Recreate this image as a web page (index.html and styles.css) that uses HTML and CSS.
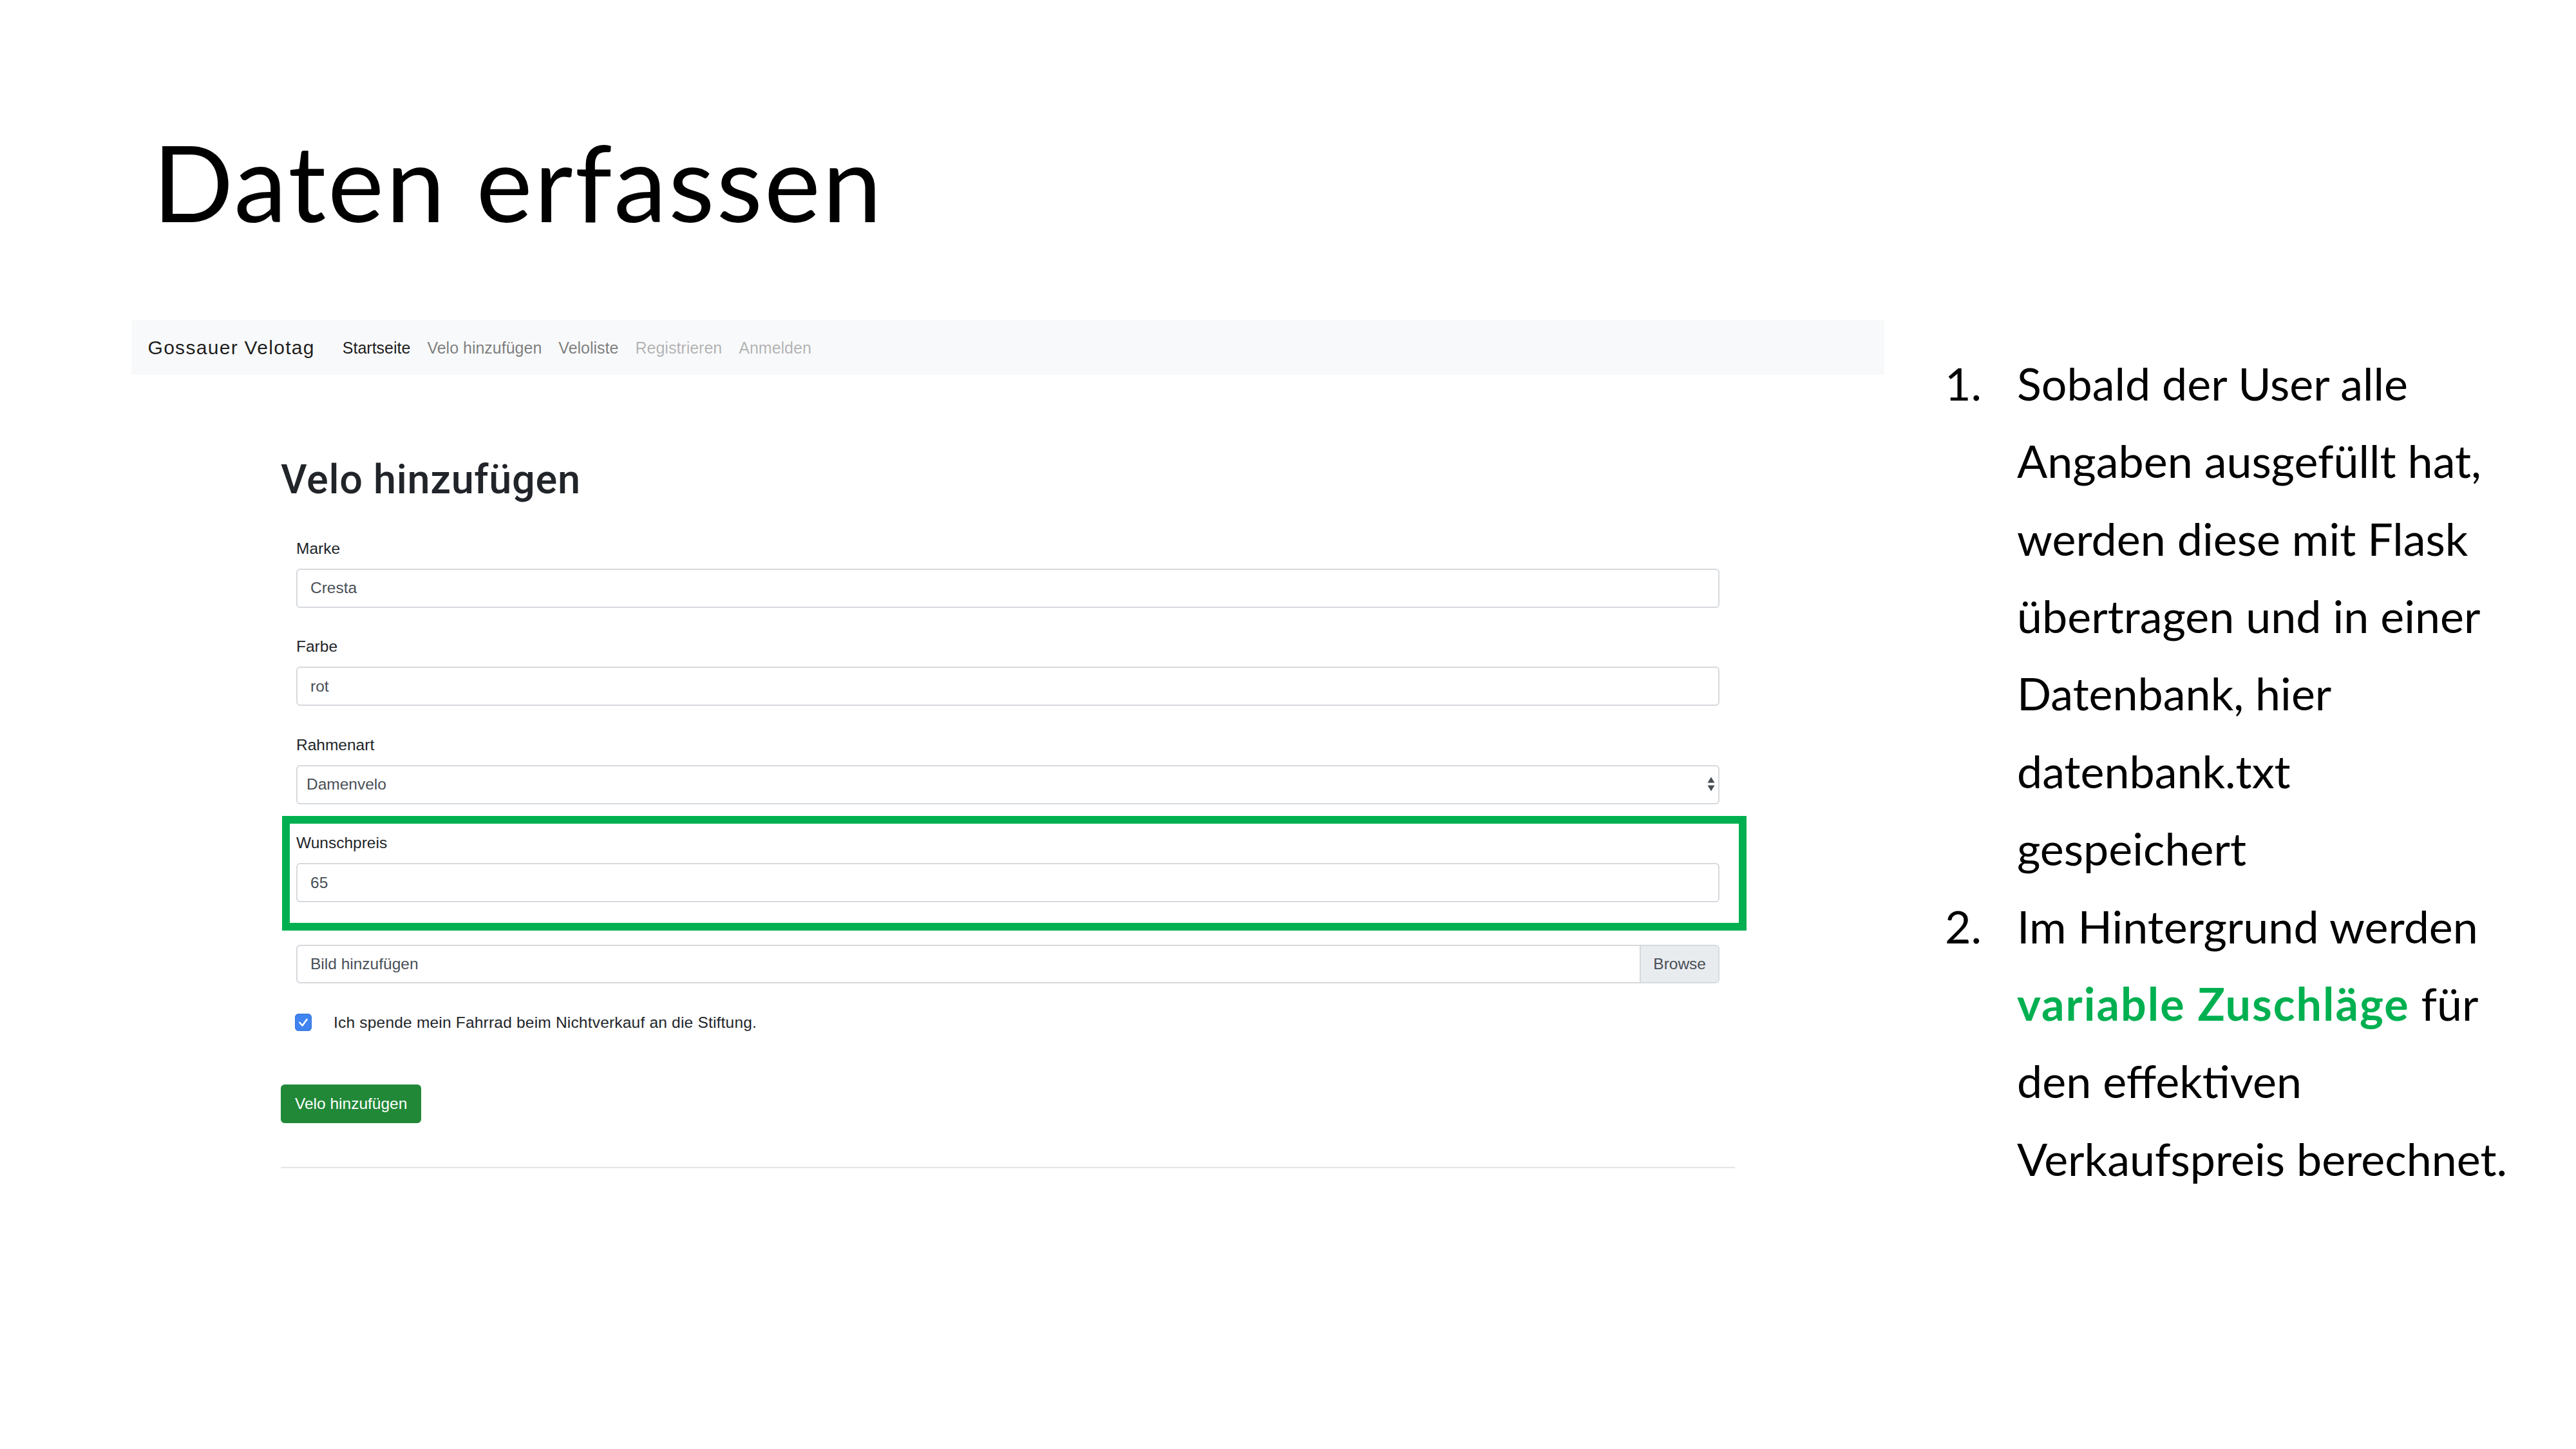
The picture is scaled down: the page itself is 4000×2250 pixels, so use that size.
FILE: index.html
```html
<!DOCTYPE html>
<html lang="de">
<head>
<meta charset="utf-8">
<title>Daten erfassen</title>
<link rel="stylesheet" href="styles.css">
</head>
<body>
<div class="slide">
  <h1 class="title">Daten erfassen</h1>
  <div class="content">
    <div class="shot">
      <nav class="navbar">
        <span class="brand">Gossauer Velotag</span>
        <span class="nav-link active">Startseite</span>
        <span class="nav-link">Velo hinzufügen</span>
        <span class="nav-link">Veloliste</span>
        <span class="nav-link disabled">Registrieren</span>
        <span class="nav-link disabled">Anmelden</span>
      </nav>
      <main class="container">
        <h2 class="page-title">Velo hinzufügen</h2>
        <form class="form">
          <div class="group">
            <div class="label">Marke</div>
            <div class="ctl">Cresta</div>
          </div>
          <div class="group">
            <div class="label">Farbe</div>
            <div class="ctl">rot</div>
          </div>
          <div class="group">
            <div class="label">Rahmenart</div>
            <div class="ctl select"><span>Damenvelo</span>
              <svg class="arrows" width="12" height="24" viewBox="0 0 12 24"><path d="M6 0.5 L11.5 9.5 H0.5 Z M0.5 13.5 H11.5 L6 22.5 Z" fill="#474d53"/></svg>
            </div>
          </div>
          <div class="group">
            <div class="label">Wunschpreis</div>
            <div class="ctl">65</div>
          </div>
          <div class="group file-group">
            <div class="ctl file-ctl"><span class="file-name">Bild hinzufügen</span><span class="browse">Browse</span></div>
          </div>
          <div class="check-row">
            <span class="checkbox"><svg width="26" height="27" viewBox="0 0 26 27"><path d="M7.5 14 L11.5 18.5 L18.5 9" fill="none" stroke="#fff" stroke-width="2.6" stroke-linecap="round" stroke-linejoin="round"/></svg></span>
            <span class="check-label">Ich spende mein Fahrrad beim Nichtverkauf an die Stiftung.</span>
          </div>
        </form>
        <div class="btn">Velo hinzufügen</div>
        <hr class="rule">
      </main>
      <div class="highlight"></div>
    </div>
    <div class="notes">
      <div class="item">
        <span class="num">1.</span>
        <span class="txt">Sobald der User alle<br>Angaben ausgefüllt hat,<br>werden diese mit Flask<br>übertragen und in einer<br>Datenbank, hier<br>datenbank.txt<br>gespeichert</span>
      </div>
      <div class="item">
        <span class="num">2.</span>
        <span class="txt">Im Hintergrund werden<br><span class="hl">variable Zuschläge</span> für<br>den effektiven<br>Verkaufspreis berechnet.</span>
      </div>
    </div>
  </div>
</div>
</body>
</html>
```

FILE: styles.css
```css
html, body {
  margin: 0;
  padding: 0;
  background: #ffffff;
  width: 4000px;
  height: 2250px;
  overflow: hidden;
}

.slide {
  width: 4000px;
  height: 2250px;
  box-sizing: border-box;
  padding-top: 182px;
}

.title {
  margin: 0;
  padding-left: 237px;
  font-family: Lato, "Open Sans", sans-serif;
  font-weight: 400;
  font-size: 165px;
  line-height: 198px;
  letter-spacing: 3px;
  color: #000000;
}

.content {
  display: flex;
  align-items: flex-start;
}

/* embedded web screenshot */
.shot {
  position: relative;
  flex: none;
  width: 2722px;
  margin-left: 204px;
  margin-top: 117px;
  font-family: "Liberation Sans", Arial, sans-serif;
  color: #212529;
}

.navbar {
  display: flex;
  align-items: center;
  height: 85px;
  padding-left: 25.5px;
  background: #f8f9fa;
}

.brand {
  font-size: 30px;
  line-height: 45px;
  letter-spacing: 1.3px;
  margin-right: 30px;
  color: rgba(0, 0, 0, 0.9);
}

.nav-link {
  font-size: 25px;
  line-height: 36px;
  padding: 0 13px;
  color: rgba(0, 0, 0, 0.5);
}

.nav-link.active {
  color: rgba(0, 0, 0, 0.9);
}

.nav-link.disabled {
  color: rgba(0, 0, 0, 0.3);
}

.container {
  margin: 0 232px;
}

.page-title {
  margin: 124.7px 0 0;
  font-family: Roboto, "Liberation Sans", sans-serif;
  font-weight: 500;
  font-size: 63px;
  line-height: 75.6px;
  letter-spacing: 0.7px;
  color: #212529;
}

.form {
  margin: 51.7px 0 0;
  padding: 0 24px;
}

.group {
  margin-bottom: 42.5px;
}

.label {
  font-size: 24.5px;
  line-height: 36px;
  margin-bottom: 13px;
  color: #212529;
}

.ctl {
  display: flex;
  align-items: center;
  box-sizing: border-box;
  height: 61px;
  padding: 0 20px;
  border: 2px solid #d6d9dd;
  border-radius: 6px;
  background: #ffffff;
  font-size: 24.5px;
  color: #495057;
}

.select {
  justify-content: space-between;
  padding-left: 14px;
  padding-right: 5px;
}

.arrows {
  display: block;
}

/* collapses with the previous group's bottom margin */
.file-group {
  margin-top: 66px;
}

.file-ctl {
  height: 60px;
  padding-right: 0;
  overflow: hidden;
}

.file-name {
  flex: 1;
}

.browse {
  align-self: stretch;
  display: flex;
  align-items: center;
  padding: 0 19px;
  background: #e9ecef;
  border-left: 2px solid #d6d9dd;
  color: #495057;
}

.check-row {
  display: flex;
  align-items: flex-start;
  margin-left: -2px;
}

.checkbox {
  flex: none;
  width: 26px;
  height: 27px;
  margin-top: 4px;
  margin-right: 34px;
  border-radius: 6px;
  background: #3f84f0;
  box-shadow: inset 0 0 0 1px #3574dc;
}

.checkbox svg {
  display: block;
}

.check-label {
  font-size: 24.5px;
  line-height: 36px;
  letter-spacing: 0.2px;
  color: #212529;
}

.btn {
  display: flex;
  align-items: center;
  width: fit-content;
  height: 60px;
  box-sizing: border-box;
  margin-top: 78px;
  padding: 0 22px;
  border-radius: 6px;
  background: #218838;
  color: #ffffff;
  font-size: 24.5px;
}

.rule {
  margin: 68px 0 0;
  height: 2px;
  border: 0;
  background: #e5e5e5;
}

.highlight {
  position: absolute;
  left: 234px;
  top: 770px;
  width: 2274px;
  height: 178px;
  box-sizing: border-box;
  border: 12px solid #00b050;
}

/* slide notes */
.notes {
  margin: 154.7px 0 0 94px;
  font-family: Lato, "Open Sans", sans-serif;
  font-weight: 400;
  font-size: 70px;
  line-height: 120.4px;
  color: #000000;
  white-space: nowrap;
}

.item {
  display: grid;
  grid-template-columns: 112px auto;
}

.hl {
  color: #00b050;
  font-weight: 700;
  letter-spacing: 2px;
}
```
